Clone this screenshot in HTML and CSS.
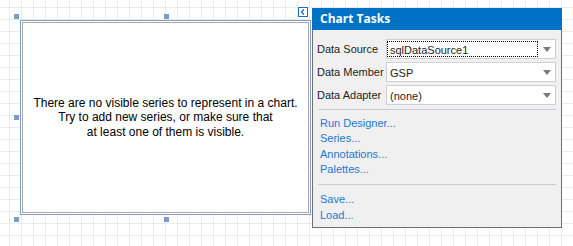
FILE: index.html
```html
<!DOCTYPE html>
<html>
<head>
<meta charset="utf-8">
<link rel="stylesheet" href="styles.css">
</head>
<body>
<div class="canvas">
  <div class="chart">
    <div class="chart-inner">
      <p class="msg">There are no visible series to represent in a chart.<br>Try to add new series, or make sure that<br>at least one of them is visible.</p>
    </div>
    <span class="handle h-tl"></span>
    <span class="handle h-tc"></span>
    <span class="handle h-ml"></span>
    <span class="handle h-bl"></span>
    <span class="handle h-bc"></span>
    <span class="smart-tag"><svg width="8" height="8" viewBox="0 0 8 8"><path d="M5 1.5 L2.5 4 L5 6.5" fill="none" stroke="#1a6fc4" stroke-width="1.4"/></svg></span>
  </div>
  <div class="tasks">
    <div class="tasks-head">Chart Tasks</div>
    <div class="tasks-body">
      <div class="row">
        <span class="label">Data Source</span>
        <div class="combo"><span class="combo-text focus">sqlDataSource1</span><span class="arrow"><svg width="8" height="5" viewBox="0 0 8 5"><path d="M0 0 H8 L4 5 Z" fill="#7a7a7a"/></svg></span></div>
      </div>
      <div class="row">
        <span class="label">Data Member</span>
        <div class="combo"><span class="combo-text">GSP</span><span class="arrow"><svg width="8" height="5" viewBox="0 0 8 5"><path d="M0 0 H8 L4 5 Z" fill="#7a7a7a"/></svg></span></div>
      </div>
      <div class="row">
        <span class="label">Data Adapter</span>
        <div class="combo"><span class="combo-text">(none)</span><span class="arrow"><svg width="8" height="5" viewBox="0 0 8 5"><path d="M0 0 H8 L4 5 Z" fill="#7a7a7a"/></svg></span></div>
      </div>
      <div class="sep"></div>
      <ul class="links">
        <li>Run Designer...</li>
        <li>Series...</li>
        <li>Annotations...</li>
        <li>Palettes...</li>
      </ul>
      <div class="sep"></div>
      <ul class="links links2">
        <li>Save...</li>
        <li>Load...</li>
      </ul>
    </div>
  </div>
</div>
</body>
</html>
```
FILE: styles.css
```css
html, body {
  margin: 0;
  padding: 0;
}
body {
  width: 573px;
  height: 246px;
  overflow: hidden;
  background-color: #ffffff;
  background-image:
    linear-gradient(to right, #ebebeb 1px, transparent 1px),
    linear-gradient(to bottom, #ebebeb 1px, transparent 1px);
  background-size: 12px 12px;
  background-position: 9px 7px;
}
.canvas {
  display: flex;
  align-items: flex-start;
  padding: 8px 0 0 20px;
  gap: 1px;
}
.chart {
  position: relative;
  margin-top: 12px;
  width: 291px;
  height: 195px;
  box-sizing: border-box;
  border: 1px solid #7f9dc6;
  padding: 1px;
  background: #fff;
}
.chart-inner {
  box-sizing: border-box;
  height: 100%;
  border: 1px solid #a9a9a9;
  background: #fff;
  display: flex;
  align-items: center;
  justify-content: center;
}
.msg {
  margin: 0;
  font-family: "Liberation Sans", Arial, sans-serif;
  font-size: 12px;
  line-height: 14.5px;
  text-align: center;
  color: #000;
}
.handle {
  position: absolute;
  width: 5px;
  height: 5px;
  background: #7d9bc4;
}
.h-tl { left: -7px; top: -7px; }
.h-tc { left: 143px; top: -7px; }
.h-ml { left: -7px; top: 94px; }
.h-bl { left: -7px; top: 196px; }
.h-bc { left: 143px; top: 196px; }
.smart-tag {
  position: absolute;
  left: 277px;
  top: -14px;
  width: 8px;
  height: 8px;
  border: 1px solid #1a6fc4;
  background: #fff;
  display: flex;
  align-items: center;
  justify-content: center;
}
.tasks {
  width: 250px;
  font-family: "Liberation Sans", Arial, sans-serif;
  font-size: 11px;
  color: #1e1e1e;
}
.tasks-head {
  height: 22px;
  background: #0072c6;
  color: #fff;
  font-family: "Open Sans", sans-serif;
  font-weight: bold;
  font-size: 12px;
  line-height: 22px;
  padding-left: 8px;
}
.tasks-body {
  background: #f0f0f0;
  border: 1px solid #6f6f6f;
  border-top: none;
  height: 198px;
  box-sizing: border-box;
  padding: 9px 5px 0 4px;
}
.row {
  display: flex;
  align-items: center;
  height: 20px;
  margin-bottom: 3px;
}
.label {
  width: 69px;
  flex: none;
  white-space: nowrap;
  line-height: 20px;
}
.combo {
  flex: 1;
  height: 20px;
  box-sizing: border-box;
  border: 1px solid #cfcfd7;
  background: #fff;
  display: flex;
  align-items: stretch;
  padding: 1px 1px 1px 0;
}
.combo-text {
  flex: 1;
  line-height: 16px;
  padding-left: 2px;
  border: 1px solid transparent;
  margin-right: 2px;
}
.combo-text.focus {
  border: 1px dotted #000;
}
.arrow {
  width: 14px;
  display: flex;
  align-items: center;
  justify-content: center;
}
.sep {
  height: 1px;
  background: #c9c9d6;
  margin: 4px 0 6px 1px;
}
.links {
  list-style: none;
  margin: 0 0 6px 0;
  padding: 0 0 0 3px;
  color: #1e78d2;
  line-height: 15.4px;
}
.links2 {
  line-height: 16px;
}
```
